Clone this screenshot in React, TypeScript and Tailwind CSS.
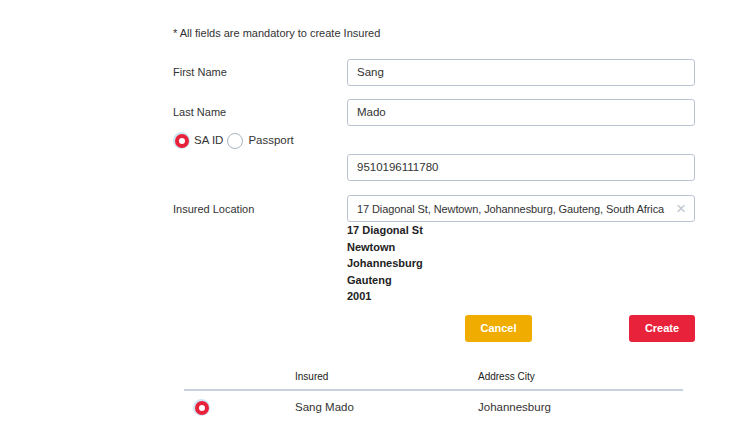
const font = { fontFamily: '"Liberation Sans", Arial, sans-serif' };

function Radio({ checked }: { checked?: boolean }) {
  return checked ? (
    <span className="flex h-[17px] w-[17px] items-center justify-center rounded-full bg-[#cde6f5]">
      <span className="h-[14px] w-[14px] rounded-full border-[4px] border-[#e8223a] bg-white" />
    </span>
  ) : (
    <span className="flex h-[17px] w-[17px] items-center justify-center">
      <span className="h-[16px] w-[16px] rounded-full border border-[#a9b4c2] bg-white" />
    </span>
  );
}

function Field({ value, clear }: { value: string; clear?: boolean }) {
  return (
    <div className="flex h-[27px] w-[348px] items-center rounded-[3px] border border-[#b9c3d1] bg-white pl-[9px] pr-[8px] text-[11.5px] text-[#333]">
      <span className={`flex-1 overflow-hidden whitespace-nowrap ${clear ? "text-[11px] tracking-[-0.1px]" : ""}`}>
        {value}
      </span>
      {clear && <span className="ml-1 text-[17px] font-light leading-none text-[#c0c6ce]">×</span>}
    </div>
  );
}

export default function App() {
  return (
    <div className="h-[427px] w-[753px] bg-white text-[#333]" style={font}>
      <div className="pl-[173px] pt-[27px]">
        <p className="text-[11px] leading-[13px]">* All fields are mandatory to create Insured</p>

        <div className="mt-[19px] flex items-center">
          <label className="w-[174px] text-[11px]">First Name</label>
          <Field value="Sang" />
        </div>
        <div className="mt-[13px] flex items-center">
          <label className="w-[174px] text-[11px]">Last Name</label>
          <Field value="Mado" />
        </div>

        <div className="mt-[6px] flex items-center text-[11.5px]">
          <Radio checked />
          <span className="ml-[4px] mr-[3px]">SA ID</span>
          <Radio />
          <span className="ml-[5px]">Passport</span>
        </div>

        <div className="mt-[5px] flex items-center">
          <span className="w-[174px]" />
          <Field value="9510196111780" />
        </div>

        <div className="mt-[14px] flex items-center">
          <label className="w-[174px] text-[11px]">Insured Location</label>
          <Field value="17 Diagonal St, Newtown, Johannesburg, Gauteng, South Africa" clear />
        </div>

        <div className="flex">
          <span className="w-[174px]" />
          <div className="w-[348px]">
            <div className="text-[11px] font-bold leading-[16.5px] text-[#222]">
              <div>17 Diagonal St</div>
              <div>Newtown</div>
              <div>Johannesburg</div>
              <div>Gauteng</div>
              <div>2001</div>
            </div>
            <div className="mt-[10px] flex justify-between pl-[118px]">
              <button className="h-[27px] w-[67px] rounded-[3px] bg-[#f0ad00] text-[11px] font-bold text-white">
                Cancel
              </button>
              <button className="h-[27px] w-[66px] rounded-[3px] bg-[#e8223a] text-[11px] font-bold text-white">
                Create
              </button>
            </div>
          </div>
        </div>
      </div>

      <div className="ml-[184px] mt-[23px] w-[499px]">
        <div className="flex h-[26px] items-center border-b-2 border-[#c9d3df] text-[10px] text-[#222]">
          <span className="w-[111px]" />
          <span className="w-[183px]">Insured</span>
          <span>Address City</span>
        </div>
        <div className="flex h-[34px] items-center text-[11.5px]">
          <span className="w-[111px] pl-[9px]">
            <Radio checked />
          </span>
          <span className="w-[183px]">Sang Mado</span>
          <span>Johannesburg</span>
        </div>
      </div>
    </div>
  );
}
